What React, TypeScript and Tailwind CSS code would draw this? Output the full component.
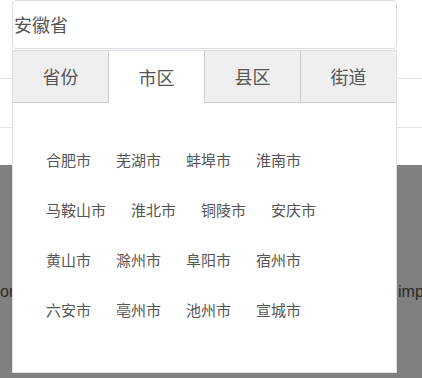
import React from "react";

const tabs = ["省份", "市区", "县区", "街道"];
const rows = [
  ["合肥市", "芜湖市", "蚌埠市", "淮南市"],
  ["马鞍山市", "淮北市", "铜陵市", "安庆市"],
  ["黄山市", "滁州市", "阜阳市", "宿州市"],
  ["六安市", "亳州市", "池州市", "宣城市"],
];

export default function App() {
  return (
    <div
      className="relative w-[422px] h-[378px] overflow-hidden bg-white"
      style={{ fontFamily: '"Noto Sans CJK SC", "Liberation Sans", sans-serif' }}
    >
      {/* page beneath */}
      <div className="h-[165px] bg-white flex flex-col">
        <div className="h-[78px]" />
        <div className="h-px bg-[#e4e4e4]" />
        <div className="h-[48px]" />
        <div className="h-px bg-[#e4e4e4]" />
      </div>
      <div className="h-[213px] bg-[#808080] pt-[117px]">
        <div
          className="flex justify-between text-[16px] leading-[20px] text-[#2a2a2a]"
          style={{ fontFamily: '"Liberation Sans", sans-serif' }}
        >
          <span>on</span>
          <span className="w-[24px] overflow-hidden whitespace-nowrap">imp</span>
        </div>
      </div>

      {/* cascader dropdown */}
      <div className="absolute left-[12px] top-0 w-[385px]">
        <div className="h-[49px] border border-[#dcdfe6] rounded-[4px] bg-white flex items-center pl-px text-[18px] text-[#555]">
          安徽省
        </div>
        <div className="mt-px h-[323px] border border-[#dcdfe6] bg-white flex flex-col">
          <div className="flex h-[52px]">
            {tabs.map((t, i) => {
              const active = i === 1;
              return (
                <div
                  key={t}
                  className={
                    "flex-1 flex items-center justify-center text-[18px] text-[#555] " +
                    (i < 3 ? "border-r border-[#cccccc] " : "") +
                    (active ? "bg-white" : "bg-[#efefef] border-b border-b-[#cccccc]")
                  }
                >
                  {t}
                </div>
              );
            })}
          </div>
          <div className="pt-[32px] pl-[33px] flex flex-col">
            {rows.map((r, i) => (
              <div key={i} className="flex gap-[25px] h-[50px] items-center text-[15px] text-[#555]">
                {r.map((c) => (
                  <span key={c}>{c}</span>
                ))}
              </div>
            ))}
          </div>
        </div>
      </div>
    </div>
  );
}
